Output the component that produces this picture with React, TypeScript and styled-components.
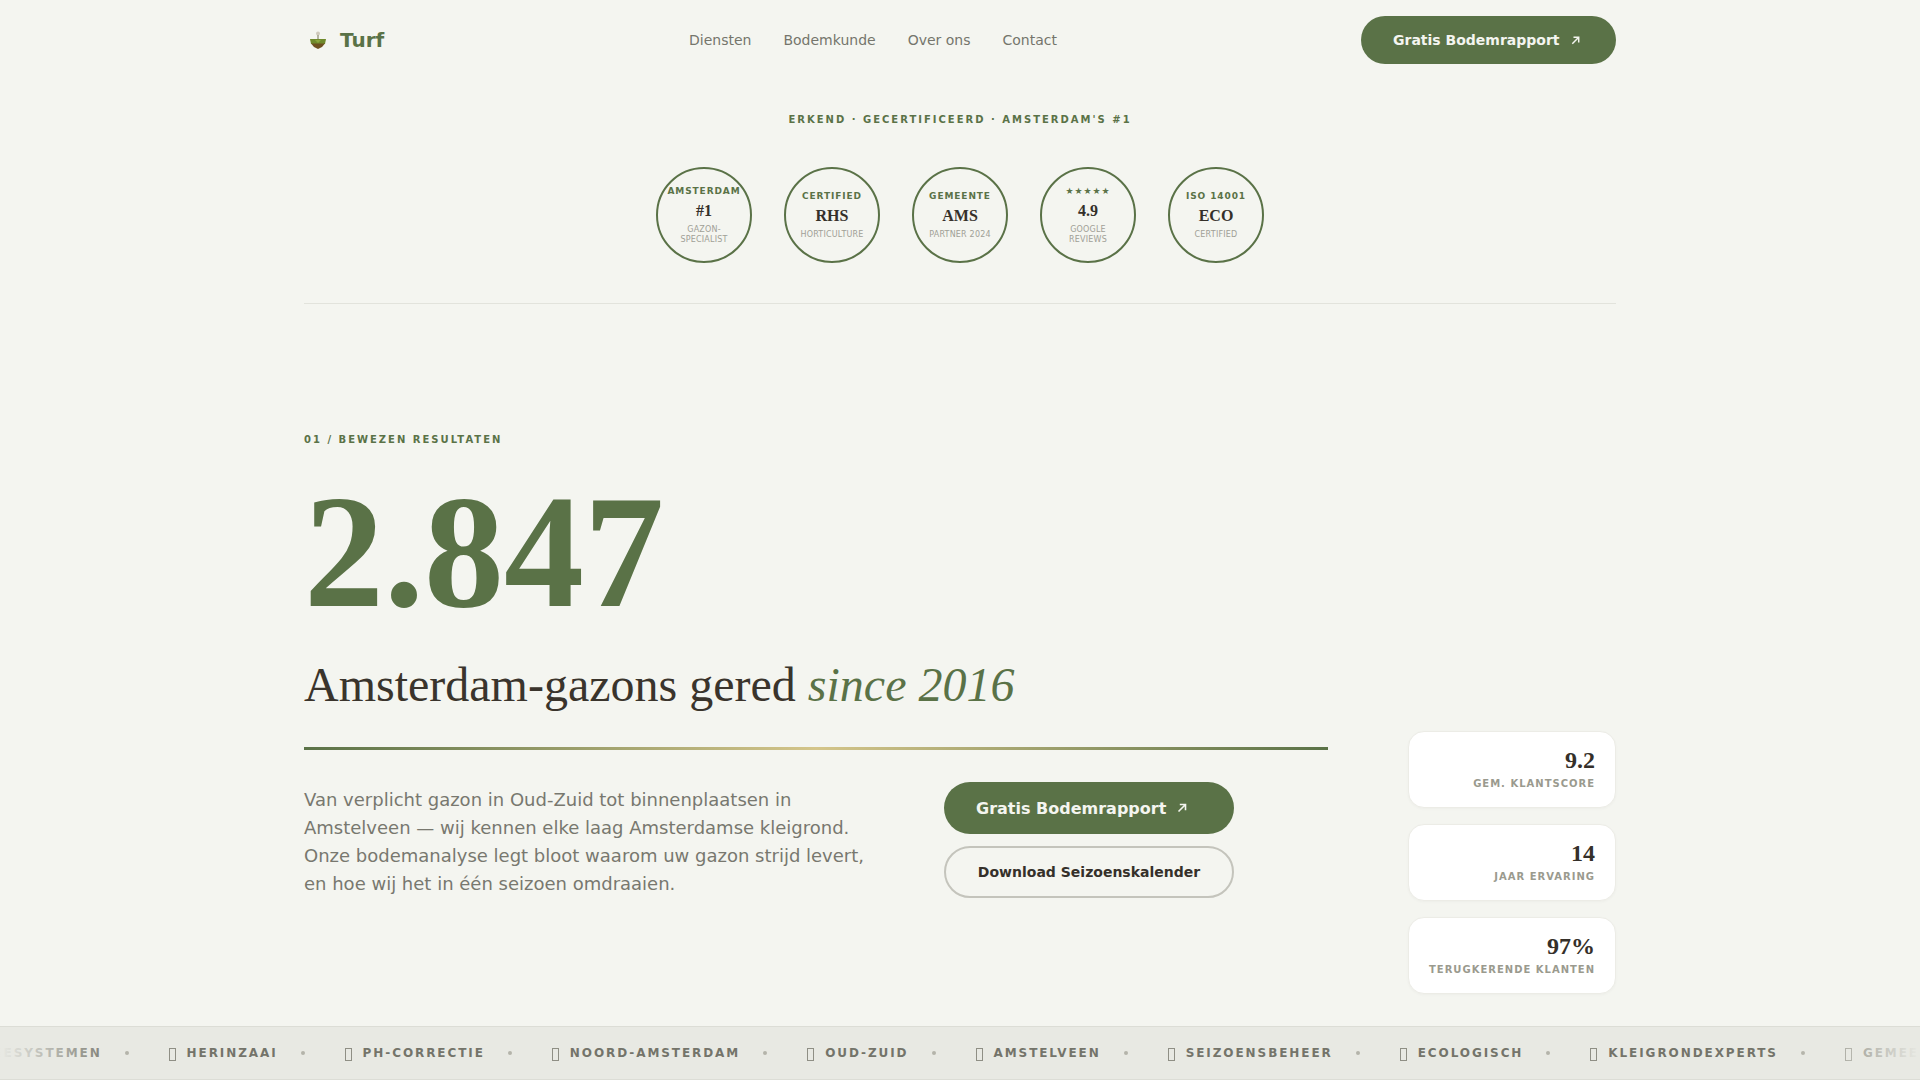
import React from "react";
import styled, { createGlobalStyle } from "styled-components";

const sans = `"DejaVu Sans", sans-serif`;
const serif = `"Liberation Serif", serif`;

const badges = [
  { top: "Amsterdam", main: "#1", sub: "Gazon-\nspecialist" },
  { top: "Certified", main: "RHS", sub: "Horticulture" },
  { top: "Gemeente", main: "AMS", sub: "Partner 2024" },
  { top: "★★★★★", main: "4.9", sub: "Google\nReviews" },
  { top: "ISO 14001", main: "ECO", sub: "Certified" },
];

const stats = [
  { value: "9.2", label: "Gem. klantscore" },
  { value: "14", label: "Jaar ervaring" },
  { value: "97%", label: "Terugkerende klanten" },
];

const tickerItems = [
  "Herinzaai",
  "pH-correctie",
  "Noord-Amsterdam",
  "Oud-Zuid",
  "Amstelveen",
  "Seizoensbeheer",
  "Ecologisch",
  "Kleigrondexperts",
  "Gemeente",
];

const Arrow: React.FC<{ size: number }> = ({ size }) => (
  <svg width={size} height={size} viewBox="0 0 12 12" fill="none" stroke="currentColor" strokeWidth="1.6">
    <path d="M2.5 9.5 9.5 2.5M3.8 2.5h5.7v5.7" />
  </svg>
);

const App: React.FC = () => (
  <>
    <GlobalStyle />
    <Page>
      <Container>
        <Nav>
          <Logo>
            <svg width="20" height="20" viewBox="0 0 20 20">
              <circle cx="10" cy="3.5" r="2" fill="#cfcabc" />
              <path d="M9.3 5h1.4v4H9.3z" fill="#9a9a80" />
              <path d="M2 9h16l-1 5H3z" fill="#6f8a2c" />
              <path d="M3 13.5h14l-3 3.5-4 2-4-2z" fill="#6e5020" />
              <path d="M7 10l3 3 3-3z" fill="#8aa63c" />
            </svg>
            Turf
          </Logo>
          <NavLinks>
            <NavLink>Diensten</NavLink>
            <NavLink>Bodemkunde</NavLink>
            <NavLink>Over ons</NavLink>
            <NavLink>Contact</NavLink>
          </NavLinks>
          <NavButton>
            Gratis Bodemrapport <Arrow size={11} />
          </NavButton>
        </Nav>

        <TrustSection>
          <TrustTitle>Erkend · Gecertificeerd · Amsterdam's #1</TrustTitle>
          <BadgeRow>
            {badges.map((b) => (
              <Badge key={b.main}>
                <BadgeTop>{b.top}</BadgeTop>
                <BadgeMain>{b.main}</BadgeMain>
                <BadgeSub>{b.sub}</BadgeSub>
              </Badge>
            ))}
          </BadgeRow>
        </TrustSection>

        <Hero>
          <Eyebrow>01 / Bewezen resultaten</Eyebrow>
          <BigNumber>2.847</BigNumber>
          <HeroGrid>
            <HeroMain>
              <Headline>
                Amsterdam-gazons gered <em>since 2016</em>
              </Headline>
              <GradientRule />
              <HeroBottom>
                <Lead>
                  Van verplicht gazon in Oud-Zuid tot binnenplaatsen in Amstelveen — wij kennen elke laag Amsterdamse
                  kleigrond. Onze bodemanalyse legt bloot waarom uw gazon strijd levert, en hoe wij het in één seizoen
                  omdraaien.
                </Lead>
                <Actions>
                  <PrimaryButton>
                    Gratis Bodemrapport <Arrow size={12} />
                  </PrimaryButton>
                  <SecondaryButton>Download Seizoenskalender</SecondaryButton>
                </Actions>
              </HeroBottom>
            </HeroMain>
            <Stats>
              {stats.map((s) => (
                <StatCard key={s.label}>
                  <StatValue>{s.value}</StatValue>
                  <StatLabel>{s.label}</StatLabel>
                </StatCard>
              ))}
            </Stats>
          </HeroGrid>
        </Hero>
      </Container>

      <Ticker>
        <TickerTrack>
          <TickerText>Drainagesystemen</TickerText>
          <Dot />
          {tickerItems.map((item) => (
            <React.Fragment key={item}>
              <TickerText>
                <MissingGlyph />
                {item}
              </TickerText>
              <Dot />
            </React.Fragment>
          ))}
        </TickerTrack>
        <FadeLeft />
        <FadeRight />
      </Ticker>
    </Page>
  </>
);

export default App;

const GlobalStyle = createGlobalStyle`
  * { box-sizing: border-box; }
  html, body { margin: 0; padding: 0; background: #f4f5f0; }
`;
const Page = styled.div`
  height: 1080px;
  overflow: hidden;
  display: flex;
  flex-direction: column;
  font-family: ${sans};
  color: #35302a;
`;
const Container = styled.div`
  width: 1312px;
  margin: 0 auto;
  flex: 1;
`;
const Nav = styled.nav`
  height: 80px;
  display: flex;
  align-items: center;
  justify-content: space-between;
`;
const Logo = styled.div`
  display: flex;
  align-items: center;
  gap: 12px;
  width: 385px;
  padding-left: 4px;
  font-size: 20px;
  font-weight: 700;
  color: #5a7247;
`;
const NavLinks = styled.div`
  display: flex;
  gap: 32px;
  margin-right: auto;
`;
const NavLink = styled.a`
  font-size: 14px;
  color: #75756c;
`;
const ButtonBase = styled.a`
  display: flex;
  align-items: center;
  border-radius: 999px;
  font-weight: 700;
`;
const NavButton = styled(ButtonBase)`
  width: 255px;
  height: 48px;
  padding-left: 32px;
  gap: 10px;
  background: #5a7247;
  color: #f4f5f0;
  font-size: 14px;
`;
const TrustSection = styled.section`
  padding-top: 32px;
  padding-bottom: 40px;
  border-bottom: 1px solid #e2e3dc;
  display: flex;
  flex-direction: column;
  align-items: center;
`;
const TrustTitle = styled.div`
  font-size: 10px;
  line-height: 15px;
  font-weight: 700;
  letter-spacing: 2px;
  text-transform: uppercase;
  color: #5a7247;
`;
const BadgeRow = styled.div`
  display: flex;
  gap: 32px;
  margin-top: 40px;
`;
const Badge = styled.div`
  width: 96px;
  height: 96px;
  border: 2px solid #5a7247;
  border-radius: 50%;
  display: flex;
  flex-direction: column;
  align-items: center;
  justify-content: center;
  text-align: center;
`;
const BadgeTop = styled.div`
  font-size: 9px;
  line-height: 12px;
  font-weight: 700;
  letter-spacing: 0.9px;
  text-transform: uppercase;
  color: #5a7247;
`;
const BadgeMain = styled.div`
  font-family: ${serif};
  font-size: 16px;
  font-weight: 700;
  line-height: 18px;
  margin: 5px 0 5px;
  color: #35302a;
`;
const BadgeSub = styled.div`
  font-size: 8px;
  line-height: 10px;
  letter-spacing: 0.2px;
  text-transform: uppercase;
  white-space: pre-line;
  color: #a0a096;
`;
const Hero = styled.section`
  padding-top: 130px;
`;
const Eyebrow = styled.div`
  font-size: 10px;
  line-height: 12px;
  font-weight: 700;
  letter-spacing: 2px;
  text-transform: uppercase;
  color: #5a7247;
`;
const BigNumber = styled.div`
  font-family: ${serif};
  font-size: 160px;
  font-weight: 700;
  line-height: 144px;
  margin-top: 34px;
  color: #5a7247;
`;
const HeroGrid = styled.div`
  display: grid;
  grid-template-columns: 1024px 1fr;
  column-gap: 80px;
  margin-top: 31px;
`;
const HeroMain = styled.div`
  min-width: 0;
`;
const Headline = styled.h1`
  font-family: ${serif};
  font-size: 48px;
  line-height: 60px;
  font-weight: 400;
  margin: 0;
  color: #3a342c;

  em {
    color: #5a7247;
  }
`;
const GradientRule = styled.div`
  height: 3px;
  margin-top: 32px;
  background: linear-gradient(90deg, #5a7247, #d4c58a, #5a7247);
`;
const HeroBottom = styled.div`
  display: flex;
  margin-top: 32px;
`;
const Lead = styled.p`
  width: 570px;
  margin: 4px 0 0;
  font-size: 18px;
  line-height: 28px;
  color: #78786f;
`;
const Actions = styled.div`
  display: flex;
  flex-direction: column;
  gap: 12px;
  margin-left: 70px;
  width: 290px;
`;
const PrimaryButton = styled(ButtonBase)`
  height: 52px;
  padding-left: 32px;
  gap: 10px;
  background: #5a7247;
  color: #f4f5f0;
  font-size: 16px;
`;
const SecondaryButton = styled(ButtonBase)`
  height: 52px;
  justify-content: center;
  border: 2px solid #c4c4bc;
  color: #35302a;
  font-size: 14px;
`;
const Stats = styled.div`
  display: flex;
  flex-direction: column;
  gap: 16px;
  margin-top: 76px;
`;
const StatCard = styled.div`
  height: 77px;
  padding: 16px 20px;
  background: #fff;
  border: 1px solid #ecece6;
  border-radius: 16px;
  box-shadow: 0 1px 3px rgba(0, 0, 0, 0.03);
  text-align: right;
`;
const StatValue = styled.div`
  font-family: ${serif};
  font-size: 24px;
  font-weight: 700;
  line-height: 24px;
  color: #35302a;
`;
const StatLabel = styled.div`
  font-size: 10px;
  line-height: 12px;
  font-weight: 700;
  letter-spacing: 1px;
  text-transform: uppercase;
  white-space: nowrap;
  margin-top: 6px;
  color: #9a9a8e;
`;
const Ticker = styled.div`
  position: relative;
  height: 54px;
  overflow: hidden;
  background: #e8e9e3;
  border-top: 1px solid #dcddd6;
  border-bottom: 1px solid #dcddd6;
`;
const TickerTrack = styled.div`
  display: flex;
  align-items: center;
  height: 100%;
  margin-left: -72px;
  white-space: nowrap;
`;
const TickerText = styled.span`
  display: inline-flex;
  align-items: center;
  font-size: 12px;
  font-weight: 700;
  letter-spacing: 1.92px;
  text-transform: uppercase;
  color: #74746a;
`;
const MissingGlyph = styled.i`
  width: 7px;
  height: 13px;
  margin: 2px 11px 0 -1px;
  border: 1px solid #8f8f85;
`;
const Dot = styled.i`
  width: 4px;
  height: 4px;
  margin: 0 41px 0 23px;
  border-radius: 50%;
  flex: none;
  background: #b4b4aa;
`;
const FadeLeft = styled.div`
  position: absolute;
  left: 0;
  top: 0;
  bottom: 0;
  width: 120px;
  background: linear-gradient(90deg, #e8e9e3, rgba(232, 233, 227, 0));
`;
const FadeRight = styled.div`
  position: absolute;
  right: 0;
  top: 0;
  bottom: 0;
  width: 120px;
  background: linear-gradient(270deg, #e8e9e3, rgba(232, 233, 227, 0));
`;
